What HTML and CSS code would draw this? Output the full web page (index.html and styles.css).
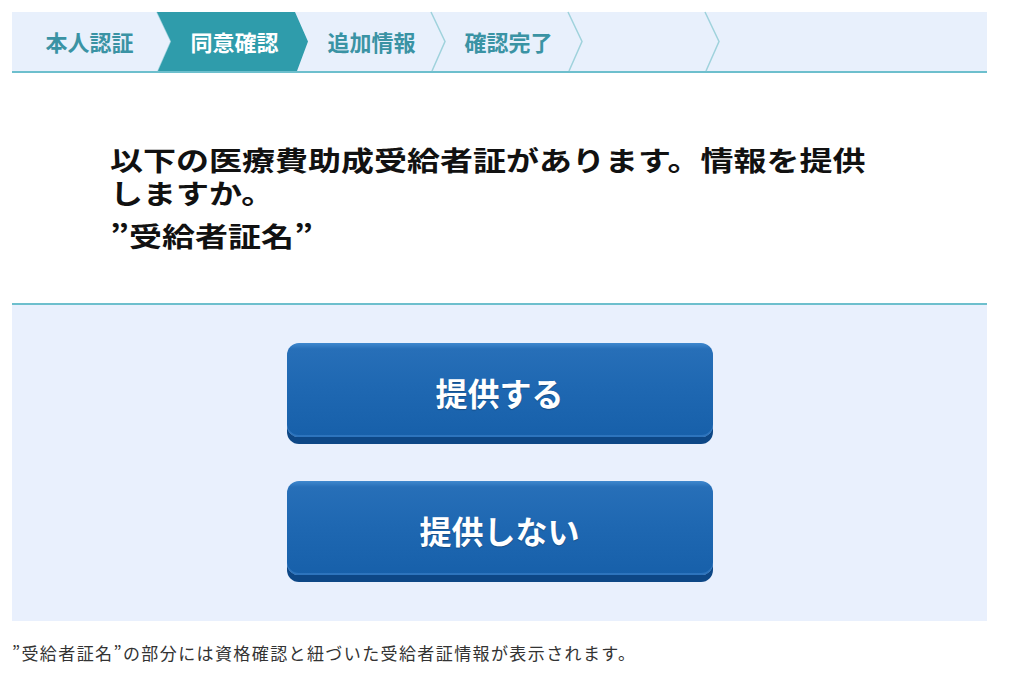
FILE: index.html
```html
<!DOCTYPE html>
<html lang="ja">
<head>
    <meta charset="UTF-8">
    <meta name="viewport" content="width=device-width, initial-scale=1.0">
    <title>同意確認</title>
    <link rel="stylesheet" href="styles.css">
</head>
<body>

<div class="page">

    <!-- Step bar -->
    <ul class="steps">
        <li class="step first">本人認証
            <svg class="chev" viewBox="0 0 16 59" preserveAspectRatio="none"><polyline points="0,0 14,29.5 1,59"/></svg>
        </li>
        <li class="step active">同意確認</li>
        <li class="step">追加情報
            <svg class="chev" viewBox="0 0 16 59" preserveAspectRatio="none"><polyline points="0,0 14,29.5 1,59"/></svg>
        </li>
        <li class="step">確認完了
            <svg class="chev" viewBox="0 0 16 59" preserveAspectRatio="none"><polyline points="0,0 14,29.5 1,59"/></svg>
        </li>
        <li class="step">
            <svg class="chev" viewBox="0 0 16 59" preserveAspectRatio="none"><polyline points="0,0 14,29.5 1,59"/></svg>
        </li>
    </ul>

    <!-- Question -->
    <div class="question">
        <div class="question-text">
            <p>以下の医療費助成受給者証があります。情報を提供しますか。</p>
            <p class="cert-name">”受給者証名”</p>
        </div>
    </div>

    <!-- Buttons -->
    <div class="actions">
        <button class="btn">提供する</button>
        <button class="btn">提供しない</button>
    </div>

    <p class="note">”受給者証名”の部分には資格確認と紐づいた受給者証情報が表示されます。</p>
</div>

</body>
</html>
```

FILE: styles.css
```css
body {
    margin: 0;
    padding: 0;
    background: #fff;
    font-family: "Noto Sans CJK JP", "Noto Sans", sans-serif;
    color: #111;
}
.page {
    width: 975px;
    margin-left: 12px;
    padding-top: 12px;
}

/* step bar */
.steps {
    list-style: none;
    margin: 0;
    padding: 0;
    display: flex;
    height: 59px;
    background-color: #e8f0fc;
    border-bottom: 2px solid #6dbfcd;
}
.step {
    position: relative;
    width: 137px;
    padding-left: 18px;
    box-sizing: border-box;
    text-align: center;
    line-height: 59px;
    font-size: 22px;
    font-weight: bold;
    color: #3a93a4;
}
.step.first {
    width: 145px;
    padding-left: 10px;
}
.step.active {
    width: 151px;
    margin-right: -14px;
    padding-left: 18px;
    padding-right: 14px;
    color: #fff;
    background-color: #2f9cab;
    clip-path: polygon(0 0, calc(100% - 13px) 0, 100% 50%, calc(100% - 11px) 100%, 1px 100%, 14px 50%);
    z-index: 1;
}
.chev {
    position: absolute;
    top: 0;
    left: 100%;
    width: 16px;
    height: 59px;
    overflow: visible;
}
.chev polyline {
    fill: none;
    stroke: #9fd2dc;
    stroke-width: 1.5;
}

/* question */
.question {
    height: 232px;
    box-sizing: border-box;
    padding: 70px 0 0 98px;
    border-bottom: 2px solid #6dbfcd;
}
.question-text {
    width: 630px;
    transform: scaleX(1.222);
    transform-origin: left top;
    font-size: 27px;
    font-weight: bold;
    line-height: 33px;
}
.question-text p {
    margin: 0;
}
.question-text .cert-name {
    margin-top: 10px;
}

/* buttons */
.actions {
    background-color: #e9f0fd;
    padding: 38px 0 39px;
    display: flex;
    flex-direction: column;
    align-items: center;
    gap: 37px;
}
.btn {
    width: 426px;
    height: 94px;
    margin-bottom: 7px;
    padding-top: 4px;
    border: none;
    border-radius: 12px;
    background: linear-gradient(#3f88ce 0, #276fb8 6px, #1f68b2 45%, #1760aa 100%);
    box-shadow: 0 7px 0 #0d4786, inset 0 -2px 0 #2d74bd;
    color: #fff;
    font-family: "Noto Sans CJK JP", sans-serif;
    font-size: 32px;
    font-weight: bold;
    cursor: pointer;
    text-shadow: 0 1px 1px rgba(0, 0, 0, 0.25);
}
.btn:hover {
    background: linear-gradient(#4a92d6 0, #2f78c0 6px, #256eb8 100%);
}

.note {
    margin: 20px 0 0;
    font-size: 17px;
    line-height: 24px;
    letter-spacing: 1.4px;
    color: #333;
}
```
